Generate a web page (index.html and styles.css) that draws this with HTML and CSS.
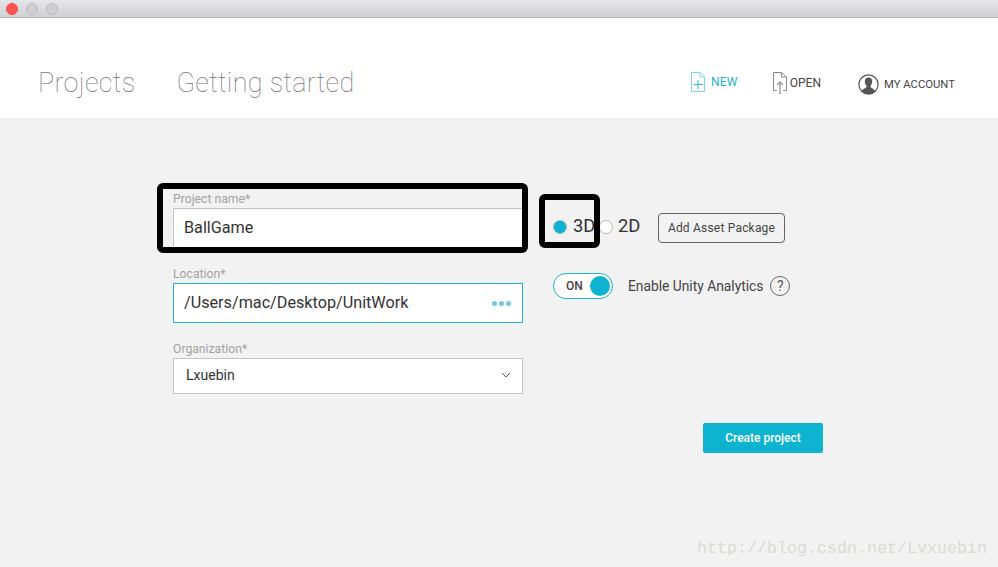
FILE: index.html
```html
<!DOCTYPE html>
<html lang="en">
<head>
  <meta charset="UTF-8" />
  <title>Unity - New Project</title>
  <link rel="stylesheet" href="styles.css">
</head>
<body>
  <div class="titlebar">
    <span class="light red"></span>
    <span class="light"></span>
    <span class="light"></span>
  </div>

  <header class="top">
    <nav class="tabs">
      <a>Projects</a>
      <a>Getting started</a>
    </nav>
    <div class="actions">
      <a class="action new">
        <svg width="16" height="22" viewBox="0 0 16 22" fill="none" stroke="#7fd6e6" stroke-width="1">
          <path d="M1.5 1.5H10L14.5 6V20.5H1.5Z" />
          <path d="M10 1.5V6H14.5" />
          <path d="M8 9V18M3.5 13.5H12.5" stroke="#2bbad2" />
        </svg>
        NEW
      </a>
      <a class="action open">
        <svg width="16" height="24" viewBox="0 0 16 24" fill="none" stroke="#8a8a8a" stroke-width="1">
          <path d="M5 19.5H1.5V1.5H9.5L14.5 6V19.5H11" />
          <path d="M9.5 1.5V6H14.5" />
          <path d="M8 23V11M5 14L8 11L11 14" stroke="#9a9a9a" stroke-width="1.4" />
        </svg>
        OPEN
      </a>
      <a class="action account">
        <svg width="21" height="21" viewBox="0 0 21 21">
          <circle cx="10.5" cy="10.5" r="9.6" fill="#fff" stroke="#555" stroke-width="1.2" />
          <path d="M3.8 17.4C4.6 14.6 7.4 14.2 8.4 13.2V11.8C7.2 10.6 6.8 9 6.8 7.6C6.8 5.2 8.2 3.6 10.5 3.6C12.8 3.6 14.2 5.2 14.2 7.6C14.2 9 13.8 10.6 12.6 11.8V13.2C13.6 14.2 16.4 14.6 17.2 17.4C15.4 19.1 13 20 10.5 20C8 20 5.6 19.1 3.8 17.4Z" fill="#555" />
        </svg>
        MY ACCOUNT
      </a>
    </div>
  </header>

  <main class="content">
    <form class="project-form">
      <div class="fields">
        <div class="field">
          <label>Project name*</label>
          <div class="input">BallGame</div>
        </div>
        <div class="field">
          <label>Location*</label>
          <div class="input focused">
            /Users/mac/Desktop/UnitWork
            <span class="dots"><i></i><i></i><i></i></span>
          </div>
        </div>
        <div class="field">
          <label>Organization*</label>
          <div class="input select">
            Lxuebin
            <svg width="10" height="6" viewBox="0 0 10 6" fill="none" stroke="#555" stroke-width="1">
              <path d="M1 1L5 5L9 1" />
            </svg>
          </div>
        </div>
      </div>

      <div class="options">
        <div class="mode-row">
          <span class="radio checked"></span><span class="radio-text">3D</span>
          <span class="radio"></span><span class="radio-text">2D</span>
          <button type="button" class="asset-btn">Add Asset Package</button>
        </div>
        <div class="analytics-row">
          <span class="toggle">ON<span class="knob"></span></span>
          <span class="analytics-text">Enable Unity Analytics</span>
          <span class="help">?</span>
        </div>
      </div>

      <div class="submit">
        <button type="button" class="create-btn">Create project</button>
      </div>
    </form>
  </main>

  <!-- marcacoes pretas por cima do print -->
  <div class="mark mark-name"></div>
  <div class="mark mark-mode"></div>

  <div class="watermark">http://blog.csdn.net/Lvxuebin</div>
</body>
</html>
```

FILE: styles.css
```css
html, body {
  height: 100%;
}

body {
  margin: 0;
  width: 998px;
  height: 567px;
  overflow: hidden;
  position: relative;
  display: flex;
  flex-direction: column;
  font-family: Roboto, sans-serif;
  background-color: #f2f2f2;
  color: #333;
}

.titlebar {
  height: 17px;
  flex-shrink: 0;
  display: flex;
  align-items: center;
  gap: 8px;
  padding-left: 6px;
  background: linear-gradient(#e6e5e7, #d0cfd1);
  border-bottom: 1px solid #b4b4b4;
}

.light {
  width: 12px;
  height: 12px;
  box-sizing: border-box;
  border-radius: 50%;
  background-color: #d0cfd0;
  border: 1px solid #bdbcbd;
}

.light.red {
  background-color: #fc5353;
  border-color: #f0484a;
}

.top {
  height: 100px;
  flex-shrink: 0;
  box-sizing: border-box;
  background-color: #fff;
  display: flex;
  justify-content: space-between;
  padding: 46px 43px 0 38px;
}

.tabs {
  display: flex;
  gap: 41px;
}

.tabs a {
  font-size: 27px;
  font-weight: 100;
  line-height: 38px;
  letter-spacing: 0.3px;
  color: #777;
}

.actions {
  display: flex;
  align-items: flex-start;
  margin-top: -1px;
}

.action {
  display: flex;
  align-items: center;
  gap: 5px;
  font-size: 12px;
  color: #444;
}

.action.new {
  margin-right: 34px;
  margin-top: 8px;
  color: #1db3cd;
  letter-spacing: 0.2px;
}

.action.open {
  margin-right: 37px;
  margin-top: 8px;
  gap: 2px;
}

.action.account {
  margin-top: 11px;
  font-size: 11.3px;
  gap: 5px;
}

.content {
  flex: 1;
  padding: 74px 0 0 173px;
}

.project-form {
  display: grid;
  grid-template-columns: 350px 1fr;
  column-gap: 30px;
  width: 650px;
}

.fields {
  display: flex;
  flex-direction: column;
  gap: 19px;
}

.field label {
  display: block;
  height: 16px;
  font-size: 12.2px;
  line-height: 15px;
  color: #a3a3a3;
}

.input {
  height: 40px;
  box-sizing: border-box;
  display: flex;
  align-items: center;
  justify-content: space-between;
  padding: 0 11px 2px 10px;
  background-color: #fff;
  border: 1px solid #c4c4c4;
  font-size: 16.2px;
  color: #333;
}

.input.focused {
  border-color: #1cb4cf;
}

.input.select {
  height: 36px;
  font-size: 14px;
  padding: 0 11px 2px 12px;
}

.dots {
  display: flex;
  gap: 2px;
  margin-top: 3px;
}

.dots i {
  width: 5px;
  height: 5px;
  border-radius: 50%;
  background-color: #74c8de;
}

.options {
  padding-top: 21px;
}

.mode-row {
  display: flex;
  align-items: center;
  height: 30px;
}

.radio {
  width: 14px;
  height: 14px;
  margin-top: -3px;
  box-sizing: border-box;
  border-radius: 50%;
  background-color: #fff;
  border: 1px solid #bbb;
}

.radio.checked {
  background-color: #0db3cf;
  border-color: #9ab8c0;
}

.radio-text {
  font-size: 18.4px;
  line-height: 24px;
  margin: -4px 0 0 5px;
  width: 27px;
  color: #333;
}

.radio + .radio-text {
  margin-left: 6px;
}

.radio-text + .radio {
  margin-left: -1px;
}

.radio-text + .radio + .radio-text {
  margin-left: 5px;
}

.asset-btn {
  margin-left: 13px;
  width: 127px;
  height: 30px;
  padding: 0 0 1px 0;
  background: transparent;
  border: 1px solid #666;
  border-radius: 4px;
  font-family: Roboto, sans-serif;
  font-size: 12px;
  color: #444;
  letter-spacing: 0.2px;
}

.analytics-row {
  display: flex;
  align-items: center;
  margin-top: 30px;
  height: 26px;
}

.toggle {
  width: 60px;
  height: 26px;
  box-sizing: border-box;
  display: flex;
  align-items: center;
  justify-content: space-between;
  padding: 0 2px 0 12px;
  border: 1px solid #1cb4cf;
  border-radius: 13px;
  background-color: #fff;
  font-size: 12px;
  font-weight: 500;
  color: #444;
}

.knob {
  width: 20px;
  height: 20px;
  border-radius: 50%;
  background-color: #0db3cf;
}

.analytics-text {
  margin-left: 15px;
  font-size: 13.8px;
  color: #444;
}

.help {
  margin-left: 7px;
  width: 20px;
  height: 20px;
  box-sizing: border-box;
  display: flex;
  align-items: center;
  justify-content: center;
  border: 1px solid #666;
  border-radius: 50%;
  font-size: 14px;
  color: #555;
}

.submit {
  grid-column: 1 / 3;
  display: flex;
  justify-content: flex-end;
  margin-top: 29px;
}

.create-btn {
  width: 120px;
  height: 30px;
  padding: 0;
  background-color: #0db3cf;
  border: none;
  border-radius: 2px;
  font-family: Roboto, sans-serif;
  font-size: 12px;
  font-weight: 500;
  color: #fff;
}

.mark {
  position: absolute;
  box-sizing: border-box;
  border: 6px solid #000;
  border-radius: 6px;
}

.mark-name {
  left: 157px;
  top: 183px;
  width: 371px;
  height: 70px;
}

.mark-mode {
  left: 539px;
  top: 194px;
  width: 61px;
  height: 54px;
}

.watermark {
  position: absolute;
  right: 11px;
  bottom: 9px;
  font-family: "Liberation Mono", monospace;
  font-size: 16.67px;
  color: #dbdbd4;
}
```
